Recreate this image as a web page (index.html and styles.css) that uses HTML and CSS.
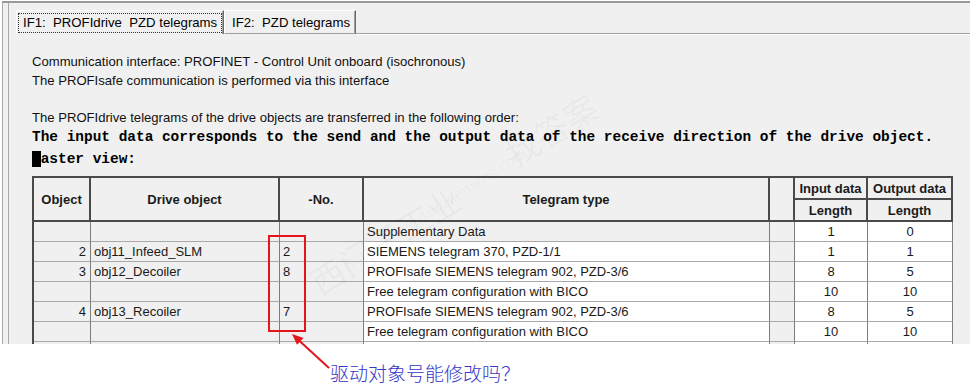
FILE: index.html
```html
<!DOCTYPE html>
<html>
<head>
<meta charset="utf-8">
<link rel="stylesheet" href="styles.css">
</head>
<body>
<div class="window">
  <div class="frame">
    <div class="tabs">
      <div class="tab tab1"><span class="focus">IF1:  PROFIdrive  PZD telegrams</span></div>
      <div class="tab tab2">IF2:  PZD telegrams</div>
      <div class="tabfill"></div>
    </div>
    <div class="panel">
      <p class="line">Communication interface: PROFINET - Control Unit onboard (isochronous)</p>
      <p class="line">The PROFIsafe communication is performed via this interface</p>
      <p class="line gap">The PROFIdrive telegrams of the drive objects are transferred in the following order:</p>
      <p class="mono">The input data corresponds to the send and the output data of the receive direction of the drive object.</p>
      <p class="mono m2"><span class="blk">M</span>aster view:</p>
      <div class="tablewrap">
        <table class="grid">
          <colgroup>
            <col class="c-obj"><col class="c-drv"><col class="c-no"><col class="c-tel"><col class="c-emp"><col class="c-in"><col class="c-out">
          </colgroup>
          <thead>
            <tr class="hr1">
              <th rowspan="2">Object</th>
              <th rowspan="2">Drive object</th>
              <th rowspan="2">-No.</th>
              <th rowspan="2">Telegram type</th>
              <th rowspan="2"></th>
              <th class="sub">Input data</th>
              <th class="sub">Output data</th>
            </tr>
            <tr class="hr2">
              <th>Length</th>
              <th>Length</th>
            </tr>
          </thead>
          <tbody>
            <tr class="dr">
              <td class="num"></td><td></td><td></td><td>Supplementary Data</td><td></td><td class="w ctr">1</td><td class="w ctr">0</td>
            </tr>
            <tr class="dr">
              <td class="num">2</td><td>obj11_Infeed_SLM</td><td>2</td><td class="w">SIEMENS telegram 370, PZD-1/1</td><td></td><td class="w ctr">1</td><td class="w ctr">1</td>
            </tr>
            <tr class="dr">
              <td class="num">3</td><td>obj12_Decoiler</td><td>8</td><td class="w">PROFIsafe SIEMENS telegram 902, PZD-3/6</td><td></td><td class="w ctr">8</td><td class="w ctr">5</td>
            </tr>
            <tr class="dr">
              <td class="num"></td><td></td><td></td><td class="w">Free telegram configuration with BICO</td><td></td><td class="w ctr">10</td><td class="w ctr">10</td>
            </tr>
            <tr class="dr">
              <td class="num">4</td><td>obj13_Recoiler</td><td>7</td><td class="w">PROFIsafe SIEMENS telegram 902, PZD-3/6</td><td></td><td class="w ctr">8</td><td class="w ctr">5</td>
            </tr>
            <tr class="dr">
              <td class="num"></td><td></td><td></td><td class="w">Free telegram configuration with BICO</td><td></td><td class="w ctr">10</td><td class="w ctr">10</td>
            </tr>
            <tr class="dr">
              <td class="num"></td><td></td><td></td><td class="w"></td><td></td><td class="w"></td><td class="w"></td>
            </tr>
          </tbody>
        </table>
        <div class="redbox"></div>
      </div>
    </div>
  </div>
</div>
<div class="note">驱动对象号能修改吗？</div>
<svg class="arrow" width="60" height="55" viewBox="0 0 60 55">
  <line x1="48" y1="43" x2="18" y2="15.5" stroke="#e3161c" stroke-width="2"/>
  <polygon points="11,9 22.5,13 16,19.8" fill="#e3161c"/>
</svg>
<div class="wm wm1">西门子工业</div>
<div class="wm wm2">support.industry.siemens.com</div>
<div class="wm wm3">找答案</div>
</body>
</html>
```

FILE: styles.css
```css
html, body {
  margin: 0;
  padding: 0;
  background: #ffffff;
}
body {
  position: relative;
  width: 970px;
  height: 392px;
  overflow: hidden;
  font-family: "Liberation Sans", Arial, sans-serif;
}
.window {
  margin: 1px 0 0 2px;
  height: 341px;
  background: #f0f0f0;
  border-top: 2px solid #9a9a9a;
  border-left: 1px solid #a8a8a8;
  overflow: hidden;
}
.frame {
  margin-left: 5px;
  height: 100%;
  border-left: 1px solid #a8a8a8;
  padding-top: 7px;
  box-sizing: border-box;
}
.tabs {
  display: flex;
  align-items: flex-end;
  height: 24px;
  padding-left: 7px;
}
.tab {
  box-sizing: border-box;
  height: 24px;
  display: flex;
  align-items: center;
  white-space: pre;
  font-size: 13.2px;
  color: #000;
  border-top: 1px solid #ffffff;
  border-left: 1px solid #ffffff;
  border-right: 1px solid #6a6a6a;
  box-shadow: inset -1px 0 0 #a0a0a0;
}
.tab1 {
  width: 208px;
  padding-left: 1px;
}
.tab2 {
  width: 132px;
  padding-left: 7px;
  border-bottom: 1px solid #a0a0a0;
}
.focus {
  box-sizing: border-box;
  height: 20px;
  width: 204px;
  display: flex;
  align-items: center;
  padding-left: 4px;
  border: 1px dotted #333;
}
.tabfill {
  flex: 1;
  height: 24px;
  box-sizing: border-box;
  border-bottom: 1px solid #a0a0a0;
  box-shadow: 0 1px 0 #ffffff;
}
.panel {
  padding: 18px 0 0 23px;
}
.line {
  margin: 0;
  font-size: 13.1px;
  line-height: 19px;
  color: #111;
}
.gap {
  margin-top: 18px;
}
.mono {
  margin: 0;
  font-family: "Liberation Mono", "Courier New", monospace;
  font-weight: bold;
  font-size: 14.45px;
  line-height: 21px;
  color: #000;
  white-space: nowrap;
}
.m2 {
  line-height: 22px;
}
.blk {
  background: #000;
  color: #000;
}
.tablewrap {
  position: relative;
  margin-top: 6px;
}
.grid {
  table-layout: fixed;
  width: 921px;
  border-collapse: separate;
  border-spacing: 0;
  border-top: 2px solid #4a4a4a;
  border-left: 2px solid #4a4a4a;
  font-size: 13px;
  color: #1a1a1a;
}
.c-obj { width: 57px; }
.c-drv { width: 189px; }
.c-no { width: 84px; }
.c-tel { width: 406px; }
.c-emp { width: 25px; }
.c-in { width: 73px; }
.c-out { width: 85px; }
.grid th {
  font-weight: bold;
  font-size: 13px;
  background: #f0f0f0;
  border-right: 2px solid #4a4a4a;
  border-bottom: 2px solid #4a4a4a;
  padding: 0;
  text-align: center;
  color: #1a1a1a;
  white-space: nowrap;
}
.hr1 { height: 22px; }
.hr2 { height: 22px; }
.grid td {
  background: #f0f0f0;
  border-right: 1px solid #7c7c7c;
  border-bottom: 1px solid #a9a9a9;
  padding: 0 3px;
  height: 19px;
  line-height: 18px;
  white-space: nowrap;
}
.dr { height: 20px; }
.grid td.num {
  text-align: right;
  padding-right: 4px;
}
.grid td.w {
  background: #ffffff;
}
.grid td.ctr {
  text-align: center;
}
.redbox {
  position: absolute;
  left: 236px;
  top: 59px;
  width: 38px;
  height: 97px;
  box-sizing: border-box;
  border: 2px solid #e3161c;
}
.note {
  margin: 17px 0 0 330px;
  font-family: "Noto Sans CJK SC", sans-serif;
  font-weight: 300;
  font-size: 19px;
  line-height: 24px;
  color: #3535c8;
}
.arrow {
  position: absolute;
  left: 281px;
  top: 325px;
}
.wm {
  position: absolute;
  pointer-events: none;
  color: rgba(0, 0, 0, 0.035);
  white-space: nowrap;
  font-family: "Noto Sans CJK SC", sans-serif;
}
.wm1 {
  left: 300px;
  top: 215px;
  font-size: 34px;
  transform: rotate(-32deg);
}
.wm2 {
  left: 330px;
  top: 200px;
  font-size: 16px;
  transform: rotate(-32deg);
  font-family: "Liberation Sans", sans-serif;
}
.wm3 {
  left: 500px;
  top: 105px;
  font-size: 34px;
  transform: rotate(-32deg);
}
```
